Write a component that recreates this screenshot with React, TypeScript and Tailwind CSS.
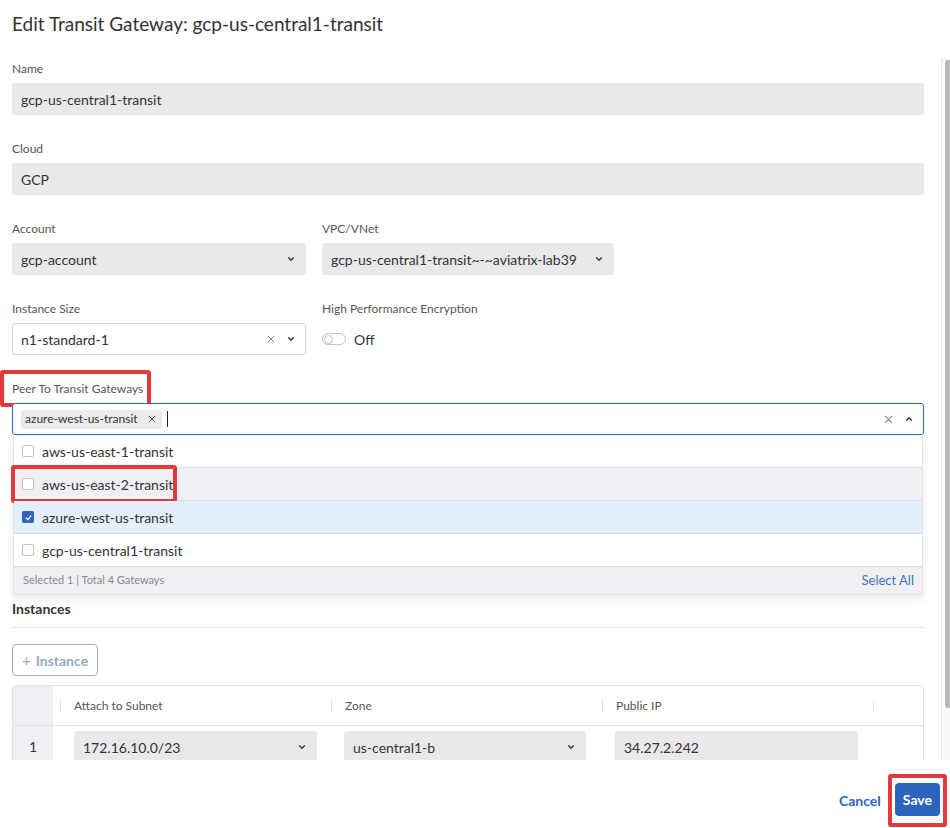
import React from "react";

const Chevron = ({ up = false }: { up?: boolean }) => (
  <svg width="8" height="6" viewBox="0 0 8 6" className={up ? "rotate-180" : ""}>
    <path d="M1.5 1.8 L4 4.3 L6.5 1.8" fill="none" stroke="#333" strokeWidth="1.3" strokeLinecap="round" strokeLinejoin="round" />
  </svg>
);

const Cross = ({ size = 9, color = "#777" }: { size?: number; color?: string }) => (
  <svg width={size} height={size} viewBox="0 0 10 10">
    <path d="M1.5 1.5 L8.5 8.5 M8.5 1.5 L1.5 8.5" stroke={color} strokeWidth="1.2" strokeLinecap="round" />
  </svg>
);

function Label({ children }: { children: React.ReactNode }) {
  return <div className="text-[12px] leading-4 text-[#555] mb-[6px]">{children}</div>;
}

function ReadOnly({ value }: { value: string }) {
  return (
    <div className="h-8 rounded-[3px] bg-[#e9e9eb] px-[9px] flex items-center text-[14px] text-[#333]">{value}</div>
  );
}

function Select({ value, className = "" }: { value: string; className?: string }) {
  return (
    <div className={`h-8 rounded-[3px] bg-[#e9e9eb] pl-[9px] pr-[11px] flex items-center justify-between text-[14px] text-[#333] ${className}`}>
      <span>{value}</span>
      <Chevron />
    </div>
  );
}

function Checkbox({ checked }: { checked?: boolean }) {
  if (checked)
    return (
      <span className="w-3 h-3 rounded-[2px] bg-[#2f64c0] flex items-center justify-center">
        <svg width="9" height="9" viewBox="0 0 10 10">
          <path d="M2 5.2 L4.2 7.3 L8 2.8" fill="none" stroke="#fff" strokeWidth="1.4" />
        </svg>
      </span>
    );
  return <span className="w-3 h-3 rounded-[2px] border border-[#c4c4c8] bg-white" />;
}

const options = [
  { name: "aws-us-east-1-transit", state: "" },
  { name: "aws-us-east-2-transit", state: "hover" },
  { name: "azure-west-us-transit", state: "selected" },
  { name: "gcp-us-central1-transit", state: "" },
];

export default function App() {
  return (
    <div className="w-[950px] h-[828px] bg-white flex flex-col overflow-hidden font-['Lato','Noto_Sans',sans-serif] text-[#333]">
      <div className="h-[58px] shrink-0 px-3 pt-[10px]">
        <h1 className="text-[19px] leading-7 text-[#333]">Edit Transit Gateway: gcp-us-central1-transit</h1>
      </div>

      <div className="h-[702px] shrink-0 flex overflow-hidden">
        <div className="w-[941px] pl-3 pr-[17px] pt-[3px] overflow-hidden">
          <div className="flex flex-col gap-[26px]">
            <div>
              <Label>Name</Label>
              <ReadOnly value="gcp-us-central1-transit" />
            </div>
            <div>
              <Label>Cloud</Label>
              <ReadOnly value="GCP" />
            </div>
            <div className="flex gap-4">
              <div className="w-[294px]">
                <Label>Account</Label>
                <Select value="gcp-account" />
              </div>
              <div className="w-[292px]">
                <Label>VPC/VNet</Label>
                <Select value="gcp-us-central1-transit~-~aviatrix-lab39" />
              </div>
            </div>
            <div className="flex gap-4">
              <div className="w-[294px]">
                <Label>Instance Size</Label>
                <div className="h-8 rounded-[3px] bg-white border border-[#d6d6da] pl-[8px] pr-[10px] flex items-center text-[14px]">
                  <span className="flex-1">n1-standard-1</span>
                  <span className="mr-[12px]"><Cross size={8} color="#888" /></span>
                  <Chevron />
                </div>
              </div>
              <div>
                <Label>High Performance Encryption</Label>
                <div className="h-8 flex items-center gap-2">
                  <span className="w-6 h-3 rounded-full border border-[#c4c4c8] bg-white flex items-center px-[1px]">
                    <span className="w-[9px] h-[9px] rounded-full border border-[#c4c4c8] bg-white" />
                  </span>
                  <span className="text-[14px]">Off</span>
                </div>
              </div>
            </div>
            <div className="relative z-10">
              <div className="relative w-fit">
                <Label>Peer To Transit Gateways</Label>
                <span className="absolute left-[-12px] top-[-11px] w-[151px] h-[37px] border-4 border-[#e4393c] rounded-[3px]" />
              </div>
              <div className="relative">
                <div className="h-8 rounded-[3px] border border-[#2e67c2] bg-white pl-2 pr-[10px] flex items-center">
                  <span className="h-[19px] rounded-[3px] bg-[#ebebee] pl-[4px] pr-[6px] flex items-center gap-[10px] text-[12px]">
                    azure-west-us-transit
                    <Cross size={8} color="#444" />
                  </span>
                  <span className="ml-[5px] w-px h-4 bg-[#222]" />
                  <span className="flex-1" />
                  <span className="mr-[12px]"><Cross size={9} color="#888" /></span>
                  <Chevron up />
                </div>
                <div className="absolute left-px right-px top-full border border-t-0 border-[#e2e2e6] rounded-b-[3px] bg-white shadow-[0_4px_10px_rgba(0,0,0,0.08)]">
                  {options.map((o) => (
                    <div
                      key={o.name}
                      className={`relative h-[33px] flex items-center gap-2 pl-[8px] border-b border-[#dcdce0] text-[14px] ${
                        o.state === "hover" ? "bg-[#f0f0f4]" : o.state === "selected" ? "bg-[#e3effb]" : "bg-white"
                      }`}
                    >
                      <Checkbox checked={o.state === "selected"} />
                      <span>{o.name}</span>
                      {o.state === "hover" && (
                        <span className="absolute left-[-3px] top-[-3px] w-[166px] h-[38px] border-4 border-[#e4393c] rounded-[3px]" />
                      )}
                    </div>
                  ))}
                  <div className="h-[27px] bg-[#f0f0f4] flex items-center justify-between pl-[9px] pr-2">
                    <span className="text-[11px] text-[#888]">Selected 1 | Total 4 Gateways</span>
                    <span className="text-[13px] text-[#3a74c4]">Select All</span>
                  </div>
                </div>
              </div>
            </div>
          </div>

          <div className="h-[165px]" />

          <div className="text-[14px] font-bold leading-[18px] pb-[9px] border-b border-[#e3e3e8]">Instances</div>

          <button className="mt-4 h-8 px-[9px] rounded-[4px] border border-[#9db1c9] text-[14px] font-bold text-[#95a9c2] flex items-center gap-[5px]">
            <span className="font-normal text-[15px]">+</span>Instance
          </button>

          <div className="mt-[9px] border border-[#e2e2e6] rounded-[4px] overflow-hidden">
            <div className="flex h-10 border-b border-[#e2e2e6] text-[12px] text-[#555]">
              <div className="w-10 bg-[#f0f0f4]" />
              {["Attach to Subnet", "Zone", "Public IP", ""].map((h, i) => (
                <div key={i} className={`flex items-center ${i === 3 ? "flex-1" : "w-[271px]"} ${i === 0 ? "ml-[7px]" : ""}`}>
                  <span className="w-px h-3 bg-[#e2e2e6]" />
                  <span className="ml-[13px]">{h}</span>
                </div>
              ))}
            </div>
            <div className="flex h-10 items-start">
              <div className="w-10 h-10 bg-[#f0f0f4] flex items-center justify-center text-[14px]">1</div>
              <div className="ml-[21px] pt-[5px] w-[271px]">
                <Select value="172.16.10.0/23" className="w-[243px]" />
              </div>
              <div className="ml-[-1px] pt-[5px] w-[271px]">
                <Select value="us-central1-b" className="w-[242px]" />
              </div>
              <div className="pt-[5px] w-[243px]">
                <ReadOnly value="34.27.2.242" />
              </div>
            </div>
          </div>
        </div>
        <div className="w-[9px] border-l border-[#e6e6e6] bg-[#fafafa] pt-[2px] pl-[3px]">
          <div className="w-[5px] h-[648px] rounded-l-[3px] bg-[#b8b8b8]" />
        </div>
      </div>

      <div className="flex-1 flex items-start justify-end pt-[14px] pr-[3px]">
        <div className="flex items-center">
          <span className="text-[14px] font-bold text-[#2d64bd] mr-[7px]">Cancel</span>
          <div className="border-4 border-[#e4393c] rounded-[3px] pt-[5px] pb-[7px] px-[3px]">
            <button className="h-[33px] px-2 rounded-[4px] bg-[#2d64bd] text-white text-[14px] font-bold">Save</button>
          </div>
        </div>
      </div>
    </div>
  );
}
